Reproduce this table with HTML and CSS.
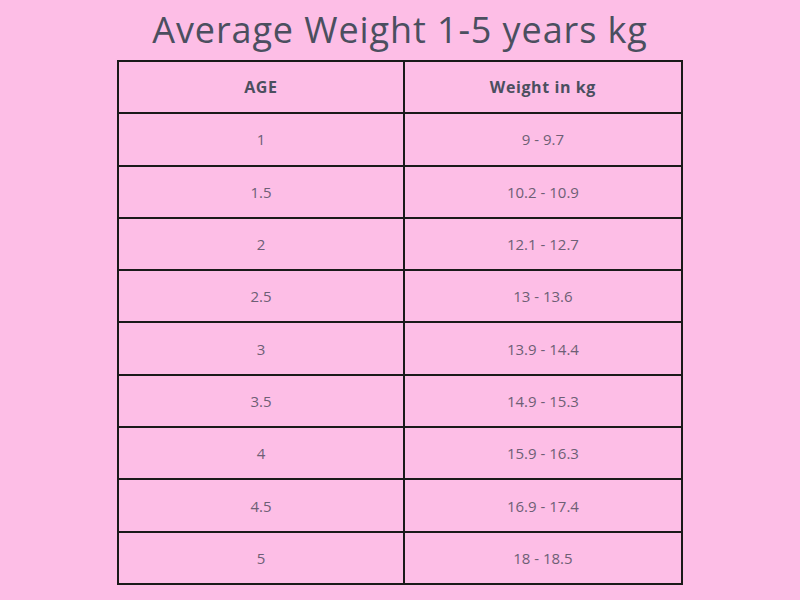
FILE: index.html
```html
<!DOCTYPE html>
<html>
<head>
<meta charset="utf-8">
<link rel="stylesheet" href="styles.css">
</head>
<body>
<div class="page">
  <h1 class="title">Average Weight 1-5 years kg</h1>
  <table class="chart">
    <thead>
      <tr><th class="c-age">AGE</th><th class="c-wt">Weight in kg</th></tr>
    </thead>
    <tbody>
      <tr><td>1</td><td>9 - 9.7</td></tr>
      <tr><td>1.5</td><td>10.2 - 10.9</td></tr>
      <tr><td>2</td><td>12.1 - 12.7</td></tr>
      <tr><td>2.5</td><td>13 - 13.6</td></tr>
      <tr><td>3</td><td>13.9 - 14.4</td></tr>
      <tr><td>3.5</td><td>14.9 - 15.3</td></tr>
      <tr><td>4</td><td>15.9 - 16.3</td></tr>
      <tr><td>4.5</td><td>16.9 - 17.4</td></tr>
      <tr><td>5</td><td>18 - 18.5</td></tr>
    </tbody>
  </table>
</div>
</body>
</html>
```
FILE: styles.css
```css
html, body {
  margin: 0;
  padding: 0;
  background: #fdbee6;
}
.page {
  width: 800px;
  height: 600px;
  display: flex;
  flex-direction: column;
  align-items: center;
  font-family: "Open Sans", "DejaVu Sans", sans-serif;
}
.title {
  margin: 8px 0 0 0;
  height: 52px;
  font-size: 36px;
  font-weight: 400;
  line-height: 44px;
  color: #4b4f5f;
  letter-spacing: 0.9px;
}
.chart {
  border-collapse: collapse;
  width: 566px;
  margin-top: 0;
}
.chart th, .chart td {
  border: 2px solid #1a1a1a;
  height: 50.3px;
  padding: 0;
  text-align: center;
  font-size: 15px;
}
.chart th {
  font-size: 16px;
  letter-spacing: 0.6px;
  font-weight: 700;
  color: #4b4f5f;
}
.chart td {
  color: #6e5f75;
}
.c-age { width: 286px; }
.c-wt { width: 278px; }
```
